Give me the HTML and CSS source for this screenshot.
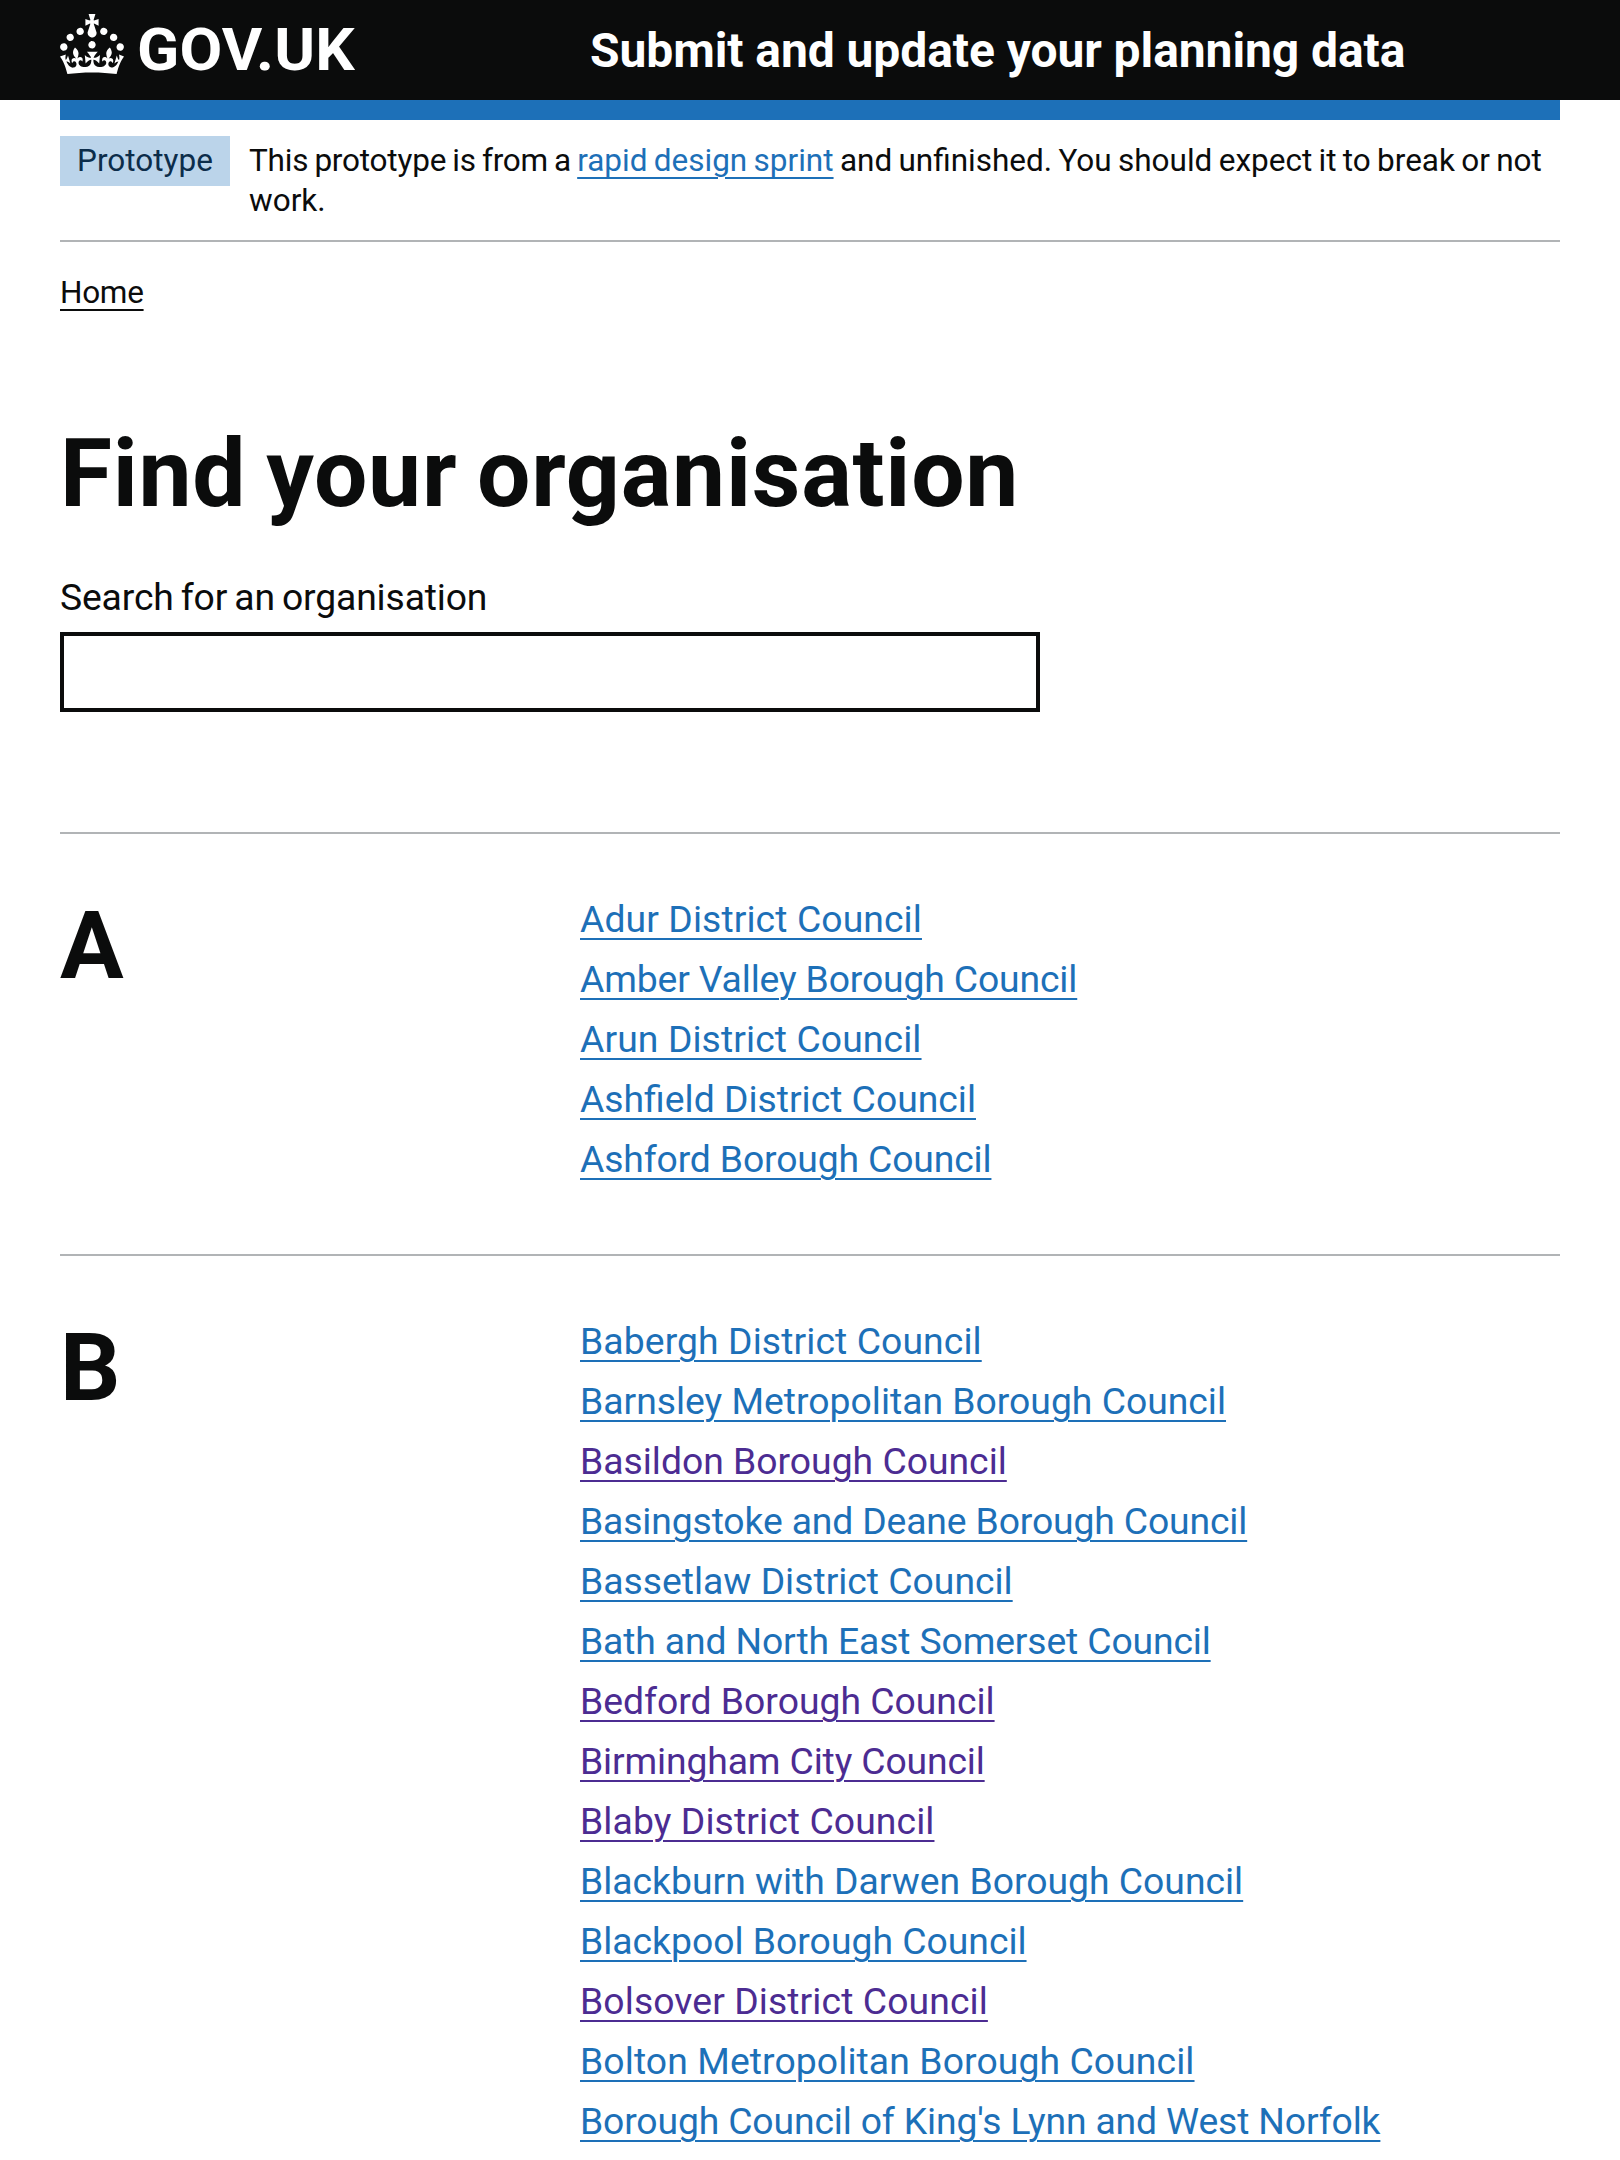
FILE: index.html
```html
<!DOCTYPE html>
<html lang="en">
<head>
<meta charset="utf-8">
<title>Find your organisation</title>
<link rel="stylesheet" href="styles.css">
</head>
<body>
<header class="header">
  <div class="container header-inner">
    <a class="logo" href="#">
      <svg class="crown" viewBox="0 0 32 30" aria-hidden="true"><path d="M22.6 10.4c-1 .4-2-.1-2.4-1-.4-.9.1-2 1-2.4.9-.4 2 .1 2.4 1s-.1 2-1 2.4m-5.9 6.7c-.9.4-2-.1-2.4-1-.4-.9.1-2 1-2.4.9-.4 2 .1 2.4 1s-.1 2-1 2.4m10.8-3.7c-1 .4-2-.1-2.4-1-.4-.9.1-2 1-2.4.9-.4 2 .1 2.4 1s0 2-1 2.4m3.3 4.8c-1 .4-2-.1-2.4-1-.4-.9.1-2 1-2.4.9-.4 2 .1 2.4 1s-.1 2-1 2.4M17 4.7l2.3 1.2V2.5l-2.3.7-.2-.2.9-3h-3.4l.9 3-.2.2c-.1.1-2.3-.7-2.3-.7v3.4L15 4.7c.1.1.1.2.2.2l-1.3 4c-.1.2-.1.4-.1.6 0 1.1.8 2 1.9 2.2h.7c1-.2 1.9-1.1 1.9-2.1 0-.2 0-.4-.1-.6l-1.3-4c-.1-.2 0-.2.1-.3m-7.6 5.7c.9.4 2-.1 2.4-1 .4-.9-.1-2-1-2.4-.9-.4-2 .1-2.4 1s0 2 1 2.4m-5 3c.9.4 2-.1 2.4-1 .4-.9-.1-2-1-2.4-.9-.4-2 .1-2.4 1s.1 2 1 2.4m-3.2 4.8c.9.4 2-.1 2.4-1 .4-.9-.1-2-1-2.4-.9-.4-2 .1-2.4 1s0 2 1 2.4m14.8 11c4.4 0 8.6.3 12.3.8 1.1-4.5 2.4-7 3.7-8.8l-2.5-.9c.2 1.3.3 1.9 0 2.7-.4-.4-.8-1.1-1.1-2.3l-1.2 4c.7-.5 1.3-.8 2-.9-1.1 2.5-2.6 3.1-3.5 3-1.1-.2-1.7-1.2-1.5-2.1.3-1.2 1.5-1.5 2.1-.1 1.1-2.3-.8-3-2-2.3 1.9-1.9 2.1-3.5.6-5.6-2.1 1.6-2.1 3.2-1.2 5.5-1.2-1.4-3.2-.6-2.5 1.6.9-1.4 2.1-.5 1.9.8-.2 1.1-1.7 2.1-3.5 1.9-2.7-.2-2.9-2.1-2.9-3.6.7-.1 1.9.5 2.9 1.9l.4-4.3c-1.1 1.1-2.1 1.4-3.2 1.4.4-1.2 2.1-3 2.1-3h-5.4s1.7 1.9 2.1 3c-1.1 0-2.1-.2-3.2-1.4l.4 4.3c1-1.4 2.2-2 2.9-1.9-.1 1.5-.2 3.4-2.9 3.6-1.9.2-3.4-.8-3.5-1.9-.2-1.3 1-2.2 1.9-.8.7-2.3-1.2-3-2.5-1.6.9-2.2.9-3.9-1.2-5.5-1.5 2-1.3 3.7.6 5.6-1.2-.7-3.1 0-2 2.3.6-1.4 1.8-1.1 2.1.1.2.9-.3 1.9-1.5 2.1-.9.2-2.4-.5-3.5-3 .6 0 1.2.3 2 .9l-1.2-4c-.3 1.1-.7 1.9-1.1 2.3-.3-.8-.2-1.4 0-2.7l-2.9.9C1.3 23 2.6 25.5 3.7 30c3.7-.5 7.9-.8 12.3-.8"/></svg>
      <span class="logo-text">GOV.UK</span>
    </a>
    <a class="service-name" href="#">Submit and update your planning data</a>
  </div>
</header>
<div class="container">
  <div class="phase-banner">
    <strong class="tag">Prototype</strong>
    <p class="phase-text"><span class="phase-intro">This prototype is from a </span><a class="link" href="#">rapid design sprint</a> and unfinished. You should expect it to break or not work.</p>
  </div>
  <nav class="breadcrumbs"><a class="link link-home" href="#">Home</a></nav>
  <main>
    <h1 class="heading">Find your organisation</h1>
    <label class="label" for="search">Search for an organisation</label>
    <input class="input" id="search" type="text">
    <section class="group">
      <h2 class="letter">A</h2>
      <ul class="list">
        <li><a class="link wide" href="#">Adur District Council</a></li>
        <li><a class="link narrow" href="#">Amber Valley Borough Council</a></li>
        <li><a class="link wide" href="#">Arun District Council</a></li>
        <li><a class="link" href="#">Ashfield District Council</a></li>
        <li><a class="link narrow" href="#">Ashford Borough Council</a></li>
      </ul>
    </section>
    <section class="group">
      <h2 class="letter">B</h2>
      <ul class="list">
        <li><a class="link wide" href="#">Babergh District Council</a></li>
        <li><a class="link" href="#">Barnsley Metropolitan Borough Council</a></li>
        <li><a class="link link-visited" href="#">Basildon Borough Council</a></li>
        <li><a class="link narrow" href="#">Basingstoke and Deane Borough Council</a></li>
        <li><a class="link" href="#">Bassetlaw District Council</a></li>
        <li><a class="link narrow" href="#">Bath and North East Somerset Council</a></li>
        <li><a class="link link-visited" href="#">Bedford Borough Council</a></li>
        <li><a class="link link-visited narrow" href="#">Birmingham City Council</a></li>
        <li><a class="link link-visited wide" href="#">Blaby District Council</a></li>
        <li><a class="link" href="#">Blackburn with Darwen Borough Council</a></li>
        <li><a class="link" href="#">Blackpool Borough Council</a></li>
        <li><a class="link link-visited wide" href="#">Bolsover District Council</a></li>
        <li><a class="link wide" href="#">Bolton Metropolitan Borough Council</a></li>
        <li><a class="link narrow" href="#">Borough Council of King's Lynn and West Norfolk</a></li>
      </ul>
    </section>
  </main>
</div>
</body>
</html>
```
FILE: styles.css
```css
* { box-sizing: border-box; }
html { overflow: hidden; height: 2160px; }
body {
  margin: 0;
  height: 2160px;
  overflow: hidden;
  background: #fff;
  color: #0b0c0c;
  font-family: Roboto, "Liberation Sans", sans-serif;
  font-size: 37.3px;
  line-height: 50px;
}
.container { width: 1500px; margin: 0 auto; }
.header { background: #0b0c0c; height: 100px; }
.header-inner { display: flex; height: 100px; color: #fff; }
.logo { display: flex; width: 530px; padding-top: 14px; color: #fff; text-decoration: none; }
.crown { width: 64px; height: 60px; fill: #fff; }
.logo-text {
  margin-left: 13px;
  font-size: 59px;
  font-weight: 700;
  line-height: 72px;
  letter-spacing: 0.2px;
  transform: scaleX(1.052);
  transform-origin: left;
}
.service-name {
  color: #fff;
  font-size: 48px;
  font-weight: 700;
  line-height: 102px;
  letter-spacing: -0.08px;
  text-decoration: none;
  white-space: nowrap;
}
.phase-banner {
  display: flex;
  align-items: flex-start;
  height: 142px;
  padding-top: 16px;
  border-top: 20px solid #1d70b8;
  border-bottom: 2px solid #b1b4b6;
  font-size: 31.5px;
  line-height: 40px;
}
.tag {
  width: 170px;
  height: 50px;
  margin-right: 19px;
  background: #bbd4ea;
  color: #0c2d4a;
  font-weight: 400;
  line-height: 50px;
  text-align: center;
}
.phase-text { margin: 5px 0 0; flex: 1; word-spacing: -1.5px; }
.phase-intro { letter-spacing: -0.2px; }
.link {
  color: #1d70b8;
  text-decoration: underline;
  text-decoration-thickness: 2px;
  text-underline-offset: 6px;
}
.link-visited { color: #4c2c92; }
.link-home { color: #0b0c0c; letter-spacing: -0.3px; }
.wide { letter-spacing: 0.1px; }
.narrow { letter-spacing: -0.14px; }
.breadcrumbs { margin-top: 31px; font-size: 31.5px; line-height: 40px; }
.heading {
  margin: 111px 0 0;
  font-size: 94.7px;
  font-weight: 700;
  line-height: 100px;
  letter-spacing: 0.75px;
  word-spacing: -4.5px;
}
.label { display: block; margin-top: 48px; letter-spacing: -0.15px; word-spacing: -2px; }
.input {
  display: block;
  width: 980px;
  height: 80px;
  margin: 10px 0 0;
  padding: 10px;
  border: 4px solid #0b0c0c;
  border-radius: 0;
  outline: 0;
  font: inherit;
}
.group {
  display: grid;
  grid-template-columns: 520px 1fr;
  padding-top: 60px;
  border-top: 2px solid #b1b4b6;
}
.input + .group { margin-top: 120px; }
.letter { margin: 2px 0 0; font-size: 94.7px; font-weight: 700; line-height: 100px; }
.list { margin: 0; padding: 0 0 60px; list-style: none; }
.list li { margin-bottom: 10px; white-space: nowrap; }
```
